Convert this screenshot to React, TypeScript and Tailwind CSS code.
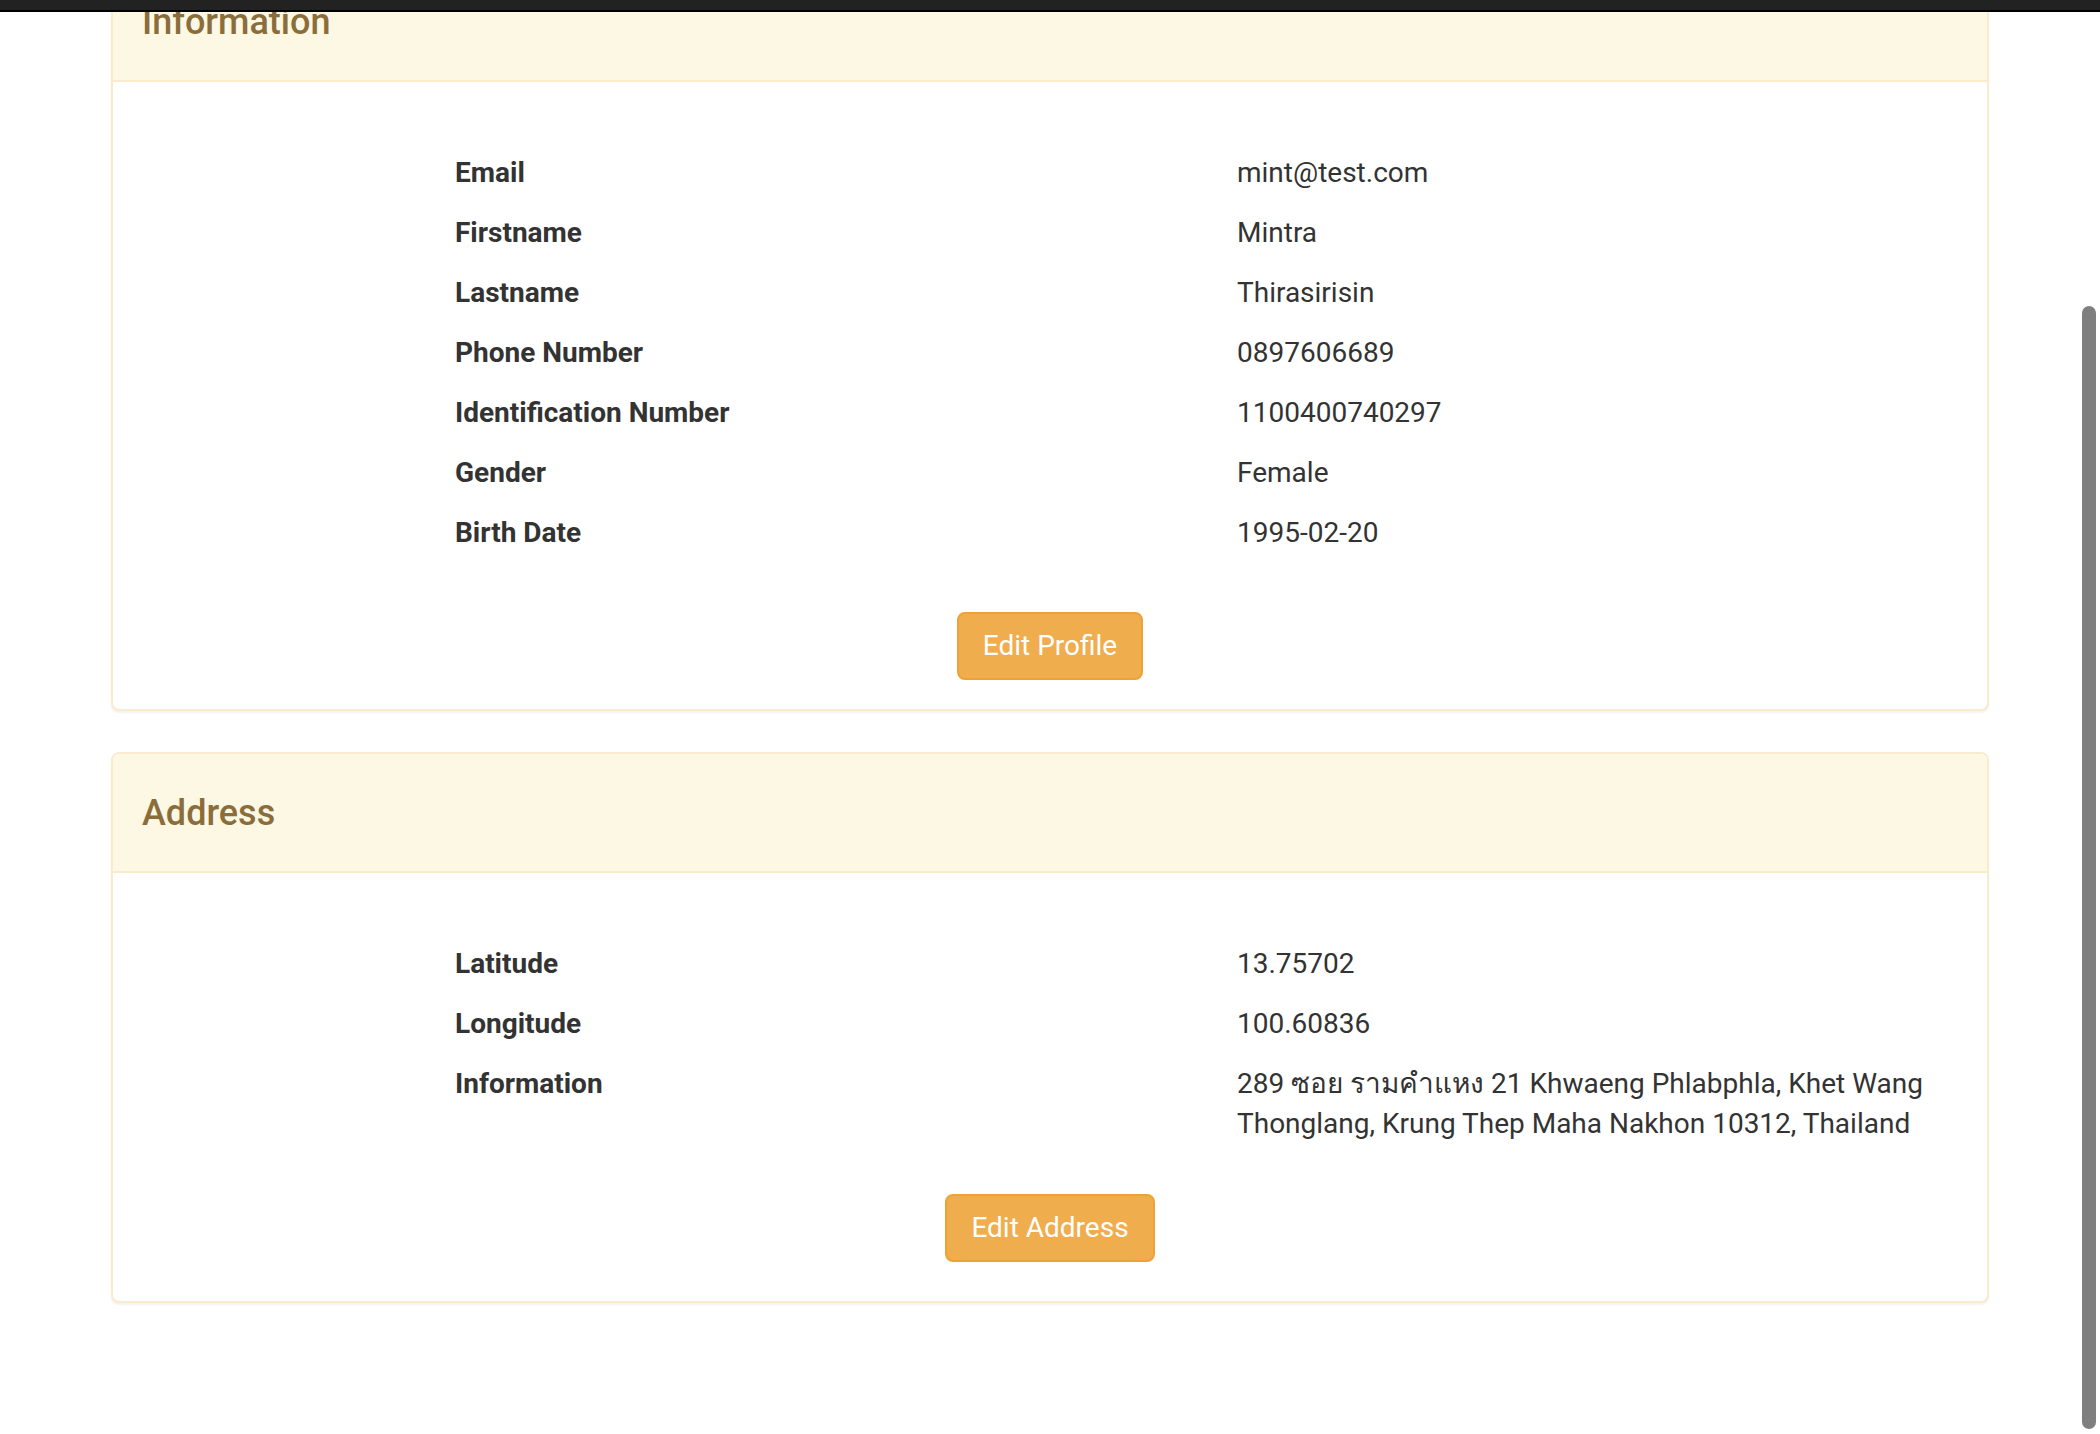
const profile = [
  { label: "Email", value: "mint@test.com" },
  { label: "Firstname", value: "Mintra" },
  { label: "Lastname", value: "Thirasirisin" },
  { label: "Phone Number", value: "0897606689" },
  { label: "Identification Number", value: "1100400740297" },
  { label: "Gender", value: "Female" },
  { label: "Birth Date", value: "1995-02-20" },
]

const address = [
  { label: "Latitude", value: "13.75702" },
  { label: "Longitude", value: "100.60836" },
  {
    label: "Information",
    value: "289 ซอย รามคำแหง 21 Khwaeng Phlabphla, Khet Wang Thonglang, Krung Thep Maha Nakhon 10312, Thailand",
  },
]

function InfoTable({ rows }: { rows: { label: string; value: string }[] }) {
  return (
    <div className="pl-[332px] pr-[50px]">
      {rows.map((row) => (
        <div key={row.label} className="grid grid-cols-[782px_1fr]">
          <div className="px-[10px] py-[10px] font-bold text-[#333]">{row.label}</div>
          <div className="px-[10px] py-[10px] text-[#333]">{row.value}</div>
        </div>
      ))}
    </div>
  )
}

function Panel({
  title,
  rows,
  button,
  className,
  buttonTop,
  bottom,
}: {
  title: string
  rows: { label: string; value: string }[]
  button: string
  className?: string
  buttonTop: string
  bottom: string
}) {
  return (
    <section
      className={`rounded-[8px] border-2 border-[#faebcc] bg-white shadow-[0_2px_2px_rgba(0,0,0,0.05)] ${className ?? ""}`}
    >
      {/* Heading */}
      <div className="flex h-[119px] items-center rounded-t-[6px] border-b-2 border-[#faebcc] bg-[#fcf8e3] px-[29px]">
        <h3 className="text-[36px] font-medium leading-[40px] text-[#8a6d3b]">{title}</h3>
      </div>

      {/* Body */}
      <div className={`pt-[61px] ${bottom}`}>
        <InfoTable rows={rows} />
        <div className={`flex justify-center ${buttonTop}`}>
          <button className="h-[68px] rounded-[8px] border-2 border-[#eea236] bg-[#f0ad4e] px-[24px] text-[28px] leading-[40px] text-white">
            {button}
          </button>
        </div>
      </div>
    </section>
  )
}

export default function App() {
  return (
    <div className="relative min-h-screen overflow-hidden bg-white font-['Roboto','Noto_Sans','DejaVu_Sans',sans-serif] text-[28px] leading-[40px] text-[#333]">
      {/* Navbar edge */}
      <div className="fixed inset-x-0 top-0 z-10 h-[12px] border-b-2 border-black bg-[#222]" />

      {/* Scrollbar thumb */}
      <div className="fixed right-[4px] top-[306px] z-10 h-[1123px] w-[14px] rounded-full bg-[#7f7f7f]" />

      <main className="-mt-[39px] px-[111px]">
        <Panel
          title="Information"
          rows={profile}
          button="Edit Profile"
          buttonTop="mt-[49px]"
          bottom="pb-[29px]"
        />
        <Panel
          title="Address"
          rows={address}
          button="Edit Address"
          className="mt-[41px]"
          buttonTop="mt-[40px]"
          bottom="pb-[39px]"
        />
      </main>
    </div>
  )
}
